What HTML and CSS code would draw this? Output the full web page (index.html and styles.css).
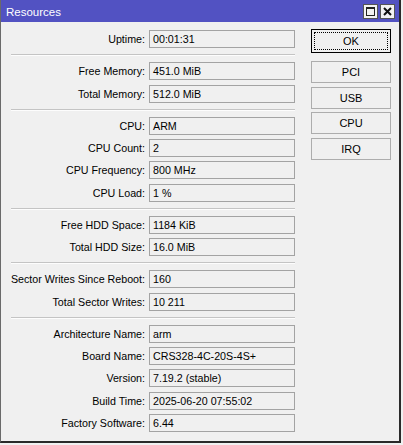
FILE: index.html
```html
<!DOCTYPE html>
<html>
<head>
<meta charset="utf-8">
<link rel="stylesheet" href="styles.css">
</head>
<body>
<div class="window">
  <div class="titlebar">
    <span class="title">Resources</span>
    <div class="tbtns">
      <div class="tbtn"><svg width="11" height="11" viewBox="0 0 11 11"><rect x="1.5" y="1.5" width="8" height="8" fill="none" stroke="#222" stroke-width="1"/><rect x="1" y="1" width="9" height="2" fill="#222"/></svg></div>
      <div class="tbtn"><svg width="11" height="11" viewBox="0 0 11 11"><path d="M2 2 L9 9 M9 2 L2 9" stroke="#111" stroke-width="2"/></svg></div>
    </div>
  </div>
  <div class="content">
    <div class="form">
      <div class="row"><span class="label">Uptime:</span><span class="field">00:01:31</span></div>
      <div class="sep"></div>
      <div class="row"><span class="label">Free Memory:</span><span class="field">451.0 MiB</span></div>
      <div class="row"><span class="label">Total Memory:</span><span class="field">512.0 MiB</span></div>
      <div class="sep"></div>
      <div class="row"><span class="label">CPU:</span><span class="field">ARM</span></div>
      <div class="row"><span class="label">CPU Count:</span><span class="field">2</span></div>
      <div class="row"><span class="label">CPU Frequency:</span><span class="field">800 MHz</span></div>
      <div class="row"><span class="label">CPU Load:</span><span class="field">1 %</span></div>
      <div class="sep"></div>
      <div class="row"><span class="label">Free HDD Space:</span><span class="field">1184 KiB</span></div>
      <div class="row"><span class="label">Total HDD Size:</span><span class="field">16.0 MiB</span></div>
      <div class="sep"></div>
      <div class="row"><span class="label">Sector Writes Since Reboot:</span><span class="field">160</span></div>
      <div class="row"><span class="label">Total Sector Writes:</span><span class="field">10 211</span></div>
      <div class="sep"></div>
      <div class="row"><span class="label">Architecture Name:</span><span class="field">arm</span></div>
      <div class="row"><span class="label">Board Name:</span><span class="field">CRS328-4C-20S-4S+</span></div>
      <div class="row"><span class="label">Version:</span><span class="field">7.19.2 (stable)</span></div>
      <div class="row"><span class="label">Build Time:</span><span class="field">2025-06-20 07:55:02</span></div>
      <div class="row"><span class="label">Factory Software:</span><span class="field">6.44</span></div>
    </div>
    <div class="buttons">
      <div class="btn ok"><span class="focus">OK</span></div>
      <div class="btn first">PCI</div>
      <div class="btn">USB</div>
      <div class="btn">CPU</div>
      <div class="btn">IRQ</div>
    </div>
  </div>
</div>
</body>
</html>
```
FILE: styles.css
```css
html, body {
  margin: 0;
  padding: 0;
  background: #f0f0f0;
}
body {
  width: 403px;
  height: 445px;
  overflow: hidden;
  font-family: "Liberation Sans", Arial, sans-serif;
  font-size: 10.7px;
  color: #000;
}
.window {
  width: 401px;
  height: 443px;
  box-sizing: border-box;
  border-left: 1px solid #6a6a6a;
  border-right: 2px solid #2a2a2a;
  border-bottom: 2px solid #2a2a2a;
  background: #f0f0f0;
  display: flex;
  flex-direction: column;
}
.titlebar {
  height: 22px;
  flex: none;
  background: #5252c2;
  display: flex;
  align-items: center;
  justify-content: space-between;
  padding: 1px 4px 0 4px;
  box-sizing: border-box;
}
.title {
  color: #fff;
  font-size: 11.5px;
  padding-left: 1px;
}
.tbtns {
  display: flex;
  gap: 2px;
}
.tbtn {
  width: 15px;
  height: 15px;
  box-sizing: border-box;
  background: #f2f2f2;
  border: 1px solid #555;
  display: flex;
  align-items: center;
  justify-content: center;
}
.tbtn svg { display: block; }
.content {
  display: flex;
  padding-top: 7px;
}
.form {
  display: flex;
  flex-direction: column;
  gap: 4.25px;
  padding-left: 10px;
  padding-top: 1px;
  width: 284px;
}
.row {
  display: flex;
  align-items: center;
  height: 18px;
}
.label {
  width: 134px;
  flex: none;
  display: flex;
  justify-content: flex-end;
  white-space: nowrap;
}
.field {
  margin-left: 4px;
  width: 146px;
  height: 18px;
  box-sizing: border-box;
  border: 1px solid #a3a3a3;
  background: #f0f0f0;
  padding-left: 3px;
  line-height: 16px;
  white-space: nowrap;
}
.sep {
  height: 0;
  border-top: 1px solid #c4c4c4;
  border-bottom: 1px solid #fdfdfd;
  margin: 2px 0 1.75px 0;
}
.buttons {
  display: flex;
  flex-direction: column;
  gap: 3.67px;
  margin-left: 16px;
}
.btn {
  width: 80px;
  height: 22px;
  box-sizing: border-box;
  border: 1px solid #adadad;
  background: #f0f0f0;
  display: flex;
  align-items: center;
  justify-content: center;
  font-size: 11px;
}
.btn.ok {
  height: 24px;
  border: 1px solid #000;
  padding: 2px;
}
.btn.first {
  margin-top: 4.3px;
}
.focus {
  width: 100%;
  height: 100%;
  box-sizing: border-box;
  border: 1px dotted #000;
  display: flex;
  align-items: center;
  justify-content: center;
}
```
